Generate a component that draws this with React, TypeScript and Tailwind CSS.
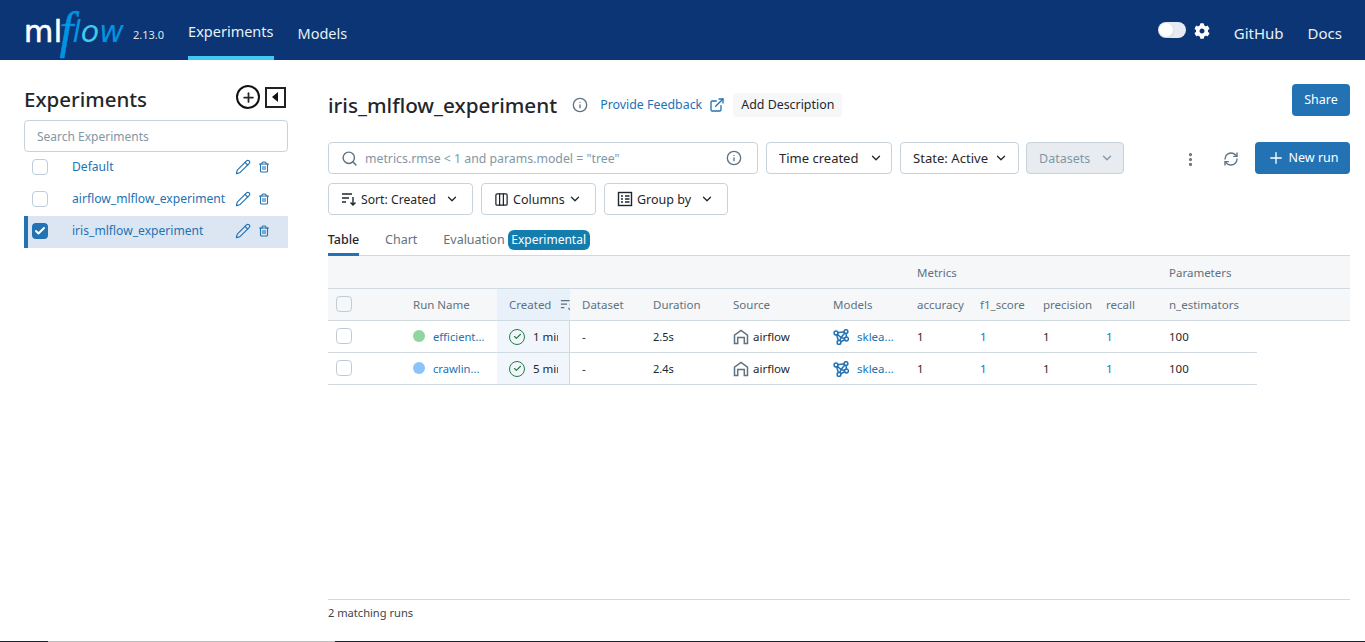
import { Check, ChevronDown, Columns3, ExternalLink, Info, MoreVertical, Pencil, Plus, RefreshCw, Search, Trash2 } from 'lucide-react';
import { FaCog } from 'react-icons/fa';

const font = { fontFamily: '"Noto Sans", "Open Sans", sans-serif' };

function Checkbox({ checked = false }: { checked?: boolean }) {
  if (checked) {
    return (
      <span className="flex h-4 w-4 items-center justify-center rounded-[4px] bg-[#2272b4]">
        <Check size={12} strokeWidth={4} className="text-white" />
      </span>
    );
  }
  return <span className="block h-4 w-4 rounded-[4px] border border-[#c0cdd8] bg-white" />;
}

function ExperimentRow({ name, active = false }: { name: string; active?: boolean }) {
  return (
    <div className={`flex h-8 items-center pb-[2px] ${active ? 'border-l-4 border-[#2272b4] bg-[#dce6f2] pl-1' : 'pl-2'}`}>
      <Checkbox checked={active} />
      <span className="ml-6 w-[163px] truncate text-[12.1px] text-[#2272b4]">{name}</span>
      <Pencil size={16} strokeWidth={1.7} className="text-[#2272b4]" />
      <Trash2 size={12} strokeWidth={2.2} className="ml-[7px] text-[#2272b4]" />
    </div>
  );
}

function SortIcon({ className = '' }: { className?: string }) {
  return (
    <svg viewBox="0 0 16 16" className={className} fill="none" stroke="currentColor" strokeWidth="1.4">
      <path d="M1 3h10M1 7h7M1 11h4" />
      <path d="M12 6v8M9.5 11.5 12 14l2.5-2.5" />
    </svg>
  );
}

function GroupIcon() {
  return (
    <svg viewBox="0 0 16 16" className="h-4 w-4 text-[#1f272d]" fill="none" stroke="currentColor" strokeWidth="1.4">
      <rect x="1.5" y="1.5" width="13" height="13" />
      <path d="M4 5h2M8 5h4.5M4 8h2M8 8h4.5M4 11h2M8 11h4.5" />
    </svg>
  );
}

function HomeIcon() {
  return (
    <svg viewBox="0 0 16 16" className="h-4 w-4 text-[#5f7281]" fill="none" stroke="currentColor" strokeWidth="1.5">
      <path d="M1.5 14.5V6.2L8 1.5l6.5 4.7v8.3h-3.2V8.5H4.7v6z" />
    </svg>
  );
}

function ModelIcon() {
  return (
    <svg viewBox="0 0 16 16" className="h-4 w-4 text-[#2272b4]" fill="none" stroke="currentColor" strokeWidth="1.5">
      <path d="M3 4 13 2.6M3 4l5 4.5 5.5 1.5M3 4l3 9.5M13 2.6 13.5 10M8 8.5 13 2.6M6 13.5 13.5 10M6 13.5 8 8.5" strokeWidth="1.5" />
      <circle cx="3" cy="4" r="1.9" fill="white" />
      <circle cx="13" cy="2.6" r="1.9" fill="white" />
      <circle cx="13.5" cy="10" r="1.9" fill="white" />
      <circle cx="6" cy="13.5" r="1.9" fill="white" />
    </svg>
  );
}

function FilterButton({
  label,
  icon,
  width,
  textSize = 'text-[12.5px]',
  right = 'pr-[13px]',
}: {
  label: string;
  icon?: React.ReactNode;
  width: string;
  textSize?: string;
  right?: string;
}) {
  return (
    <button className={`flex h-8 items-center justify-between rounded-[4px] border border-[#c7d2da] bg-white pl-3 text-[#1f272d] ${textSize} ${width} ${right}`}>
      <span className="flex items-center gap-1">
        {icon}
        <span className="pt-[2px]">{label}</span>
      </span>
      <ChevronDown size={14} strokeWidth={2.2} />
    </button>
  );
}

const gridCols = 'grid grid-cols-[85px_84px_73px_83px_80px_100px_84px_63px_63px_63px_63px_88px]';

function RunRow({ dot, name, time, duration }: { dot: string; name: string; time: string; duration: string }) {
  return (
    <div className={`${gridCols} h-8 w-[929px] items-center border-b border-[#d1d9e1] text-[11.5px] text-[#1f272d]`}>
      <div className="mb-[2px] pl-2"><Checkbox /></div>
      <div className="flex items-center gap-2">
        <span className={`h-3 w-3 rounded-full ${dot}`} />
        <span className="pt-[1px] text-[11.2px] text-[#2272b4]">{name}</span>
      </div>
      <div className="flex h-full items-center gap-2 border-r border-[#d1d9e1] bg-[#f0f6fc] pl-3">
        <span className="flex h-4 w-4 shrink-0 items-center justify-center rounded-full border-[1.5px] border-[#277c43]">
          <Check size={9} strokeWidth={3} className="text-[#277c43]" />
        </span>
        <span className="w-[25px] overflow-hidden whitespace-nowrap">{time}</span>
      </div>
      <div className="pl-3">-</div>
      <div className="pt-[1px] text-[11px]">{duration}</div>
      <div className="flex items-center gap-1"><HomeIcon />airflow</div>
      <div className="flex items-center gap-2"><ModelIcon /><span className="text-[#2272b4]">sklea...</span></div>
      <div>1</div>
      <div className="text-[#2272b4]">1</div>
      <div>1</div>
      <div className="text-[#2272b4]">1</div>
      <div>100</div>
    </div>
  );
}

export default function App() {
  return (
    <div style={font} className="flex h-[642px] w-[1365px] flex-col overflow-hidden bg-white text-[#1f272d]">
      {/* Top bar */}
      <header className="flex h-[60px] shrink-0 items-center justify-between bg-[#0b3574] pl-6 pr-[23px]">
        <div className="flex h-full items-center">
          <div className="flex h-full w-[109px] items-center leading-none">
            <span className="mt-[4px] font-['DejaVu_Sans'] text-[30px] leading-none tracking-[0.5px] text-white [-webkit-text-stroke:0.6px_white]">ml</span>
            <span className="ml-[-3px] font-['Liberation_Serif'] text-[50px] italic leading-none text-[#0194e2] [-webkit-text-stroke:0.5px_#0194e2]">f</span>
            <span className="ml-[-1px] mt-[4px] font-['DejaVu_Sans'] text-[30px] italic leading-none">
              <span className="text-[#0194e2]">l</span>
              <span className="text-[#43c9ed]">o</span>
              <span className="text-[#0194e2]">w</span>
            </span>
          </div>
          <span className="mt-[11px] text-[11px] text-[#dfe6ef]">2.13.0</span>
          <nav className="ml-6 flex h-full gap-6 text-[14.5px] text-[#e6f1f5]">
            <span className="flex h-full items-center border-b-[4px] border-[#43c9ed] pt-[8px]">Experiments</span>
            <span className="flex h-full items-center pt-[7px]">Models</span>
          </nav>
        </div>
        <div className="flex items-center pt-[6px] text-[15px] text-[#e6f1f5]">
          <span className="-mt-[6px] flex h-4 w-7 items-center rounded-full bg-white/90 p-[1px]">
            <span className="h-[14px] w-[14px] rounded-full bg-white shadow" />
          </span>
          <FaCog size={16} className="-mt-[5px] ml-2 text-white" />
          <span className="ml-6">GitHub</span>
          <span className="ml-6">Docs</span>
        </div>
      </header>

      <div className="flex min-h-0 flex-1">
        {/* Experiment list */}
        <aside className="w-[328px] shrink-0 pl-6 pr-10 pt-[24px]">
          <div className="flex h-[32px] items-center justify-between">
            <h1 className="pb-[2px] text-[20.5px] font-medium leading-none">Experiments</h1>
            <div className="flex -translate-y-[3px] items-center gap-[5px] pr-[2px]">
              <span className="flex h-6 w-6 items-center justify-center rounded-full border-2 border-[#111]">
                <Plus size={15} strokeWidth={2.8} />
              </span>
              <span className="flex h-[21px] w-[21px] items-center justify-center border-2 border-[#222]">
                <span className="mr-[2px] h-0 w-0 border-y-[5px] border-r-[6px] border-y-transparent border-r-[#111]" />
              </span>
            </div>
          </div>
          <div className="mt-[4px] flex h-8 items-center rounded-[4px] border border-[#c7d2da] px-3 pt-[2px] text-[12px] text-[#8396a5]">
            Search Experiments
          </div>
          <ExperimentRow name="Default" />
          <ExperimentRow name="airflow_mlflow_experiment" />
          <ExperimentRow name="iris_mlflow_experiment" active />
        </aside>

        {/* Main content */}
        <main className="flex min-w-0 flex-1 flex-col pr-[15px] pt-6">
          <div className="flex h-[42px] items-center">
            <h2 className="text-[20.7px] font-medium leading-none">iris_mlflow_experiment</h2>
            <Info size={16} className="ml-[15px] text-[#5f7281]" />
            <span className="ml-3 text-[12.4px] text-[#2272b4]">Provide Feedback</span>
            <ExternalLink size={16} className="ml-[7px] text-[#2272b4]" />
            <span className="ml-2 flex h-6 items-center rounded-[4px] bg-[#f5f7f9] px-2 text-[12.4px]">Add Description</span>
            <button className="ml-auto flex h-8 w-[58px] self-start items-center justify-center rounded-[4px] bg-[#2272b4] text-[12.5px] text-white">Share</button>
          </div>

          <div className="mt-4 flex items-center">
            <div className="flex h-8 w-[430px] items-center rounded-[4px] border border-[#c7d2da] pl-3 pr-[15px] text-[12.3px] text-[#8396a5]">
              <Search size={17} className="text-[#5f7281]" />
              <span className="ml-[7px] flex-1 pt-[2px]">metrics.rmse &lt; 1 and params.model = "tree"</span>
              <Info size={16} className="text-[#5f7281]" />
            </div>
            <div className="ml-2"><FilterButton label="Time created" width="w-[126px]" textSize="text-[13px]" right="pr-[8px]" /></div>
            <div className="ml-2"><FilterButton label="State: Active" width="w-[119px]" textSize="text-[13.1px]" right="pr-[10px]" /></div>
            <button className="ml-[7px] flex h-8 w-[98px] items-center justify-between rounded-[4px] border border-[#c7d2da] bg-[#e8ecf0] pl-3 pr-[9px] text-[12.5px] text-[#8396a5]">
              <span className="pt-[2px]">Datasets</span>
              <ChevronDown size={14} strokeWidth={2.2} />
            </button>
            <MoreVertical size={17} strokeWidth={2.5} className="ml-[58px] mt-[2px] text-[#5f7281]" />
            <RefreshCw size={16} className="ml-[24px] mt-[2px] text-[#5f7281]" />
            <button className="ml-auto flex h-8 w-[95px] items-center justify-center gap-1 rounded-[4px] bg-[#2272b4] text-[12.5px] text-white">
              <Plus size={18} strokeWidth={1.8} />New run
            </button>
          </div>

          <div className="mt-[9px] flex gap-2">
            <FilterButton label="Sort: Created" icon={<SortIcon className="h-4 w-4 text-[#1f272d]" />} width="w-[145px]" textSize="text-[12.2px]" />
            <FilterButton label="Columns" icon={<Columns3 size={15} />} width="w-[115px]" />
            <FilterButton label="Group by" icon={<GroupIcon />} width="w-[124px]" />
          </div>

          <div className="mt-[16px] flex h-[25px] items-start border-b border-[#d1d9e1] text-[12.5px] leading-[16px]">
            <span className="flex h-[25px] w-[31px] justify-center border-b-[3px] border-[#2272b4] pt-[1px] font-medium">Table</span>
            <span className="ml-[26px] pt-[1px] text-[#5f7281]">Chart</span>
            <span className="ml-[26px] pt-[1px] text-[#5f7281]">Evaluation</span>
            <span className="ml-[3px] flex h-5 w-[82px] -translate-y-[1px] items-center justify-center rounded-[6px] bg-[#137dae] text-[12px] text-white">Experimental</span>
          </div>

          <div className={`${gridCols} h-[33px] items-center border-b border-[#d1d9e1] bg-[#f5f7f9] pt-[2px] text-[11.5px] text-[#5f7281]`}>
            <div className="col-start-8 whitespace-nowrap">Metrics</div>
            <div className="col-start-12 whitespace-nowrap">Parameters</div>
          </div>
          <div className={`${gridCols} h-8 items-center border-b border-[#d1d9e1] bg-[#f5f7f9] text-[11.5px] text-[#5f7281]`}>
            <div className="mb-[2px] pl-2"><span className="block h-4 w-4 rounded-[4px] border border-[#c0cdd8]" /></div>
            <div>Run Name</div>
            <div className="flex h-full items-center overflow-hidden bg-[#e8f1fa] pl-3">
              Created
              <SortIcon className="ml-[9px] h-[14px] w-[14px] shrink-0" />
            </div>
            <div className="pl-3">Dataset</div>
            <div>Duration</div>
            <div>Source</div>
            <div>Models</div>
            <div>accuracy</div>
            <div>f1_score</div>
            <div>precision</div>
            <div>recall</div>
            <div>n_estimators</div>
          </div>
          <RunRow dot="bg-[#8fd6a0]" name="efficient..." time="1 minute ago" duration="2.5s" />
          <RunRow dot="bg-[#8bc3fb]" name="crawlin..." time="5 minutes ago" duration="2.4s" />

          <div className="mb-[14px] mt-auto flex h-[28px] items-center border-t border-[#d1d9e1] text-[11.1px] text-[#3a4650]">
            2 matching runs
          </div>
        </main>
      </div>

      {/* 1px strip along the bottom edge of the capture */}
      <div className="flex h-px shrink-0 bg-[#1d1f2e]">
        <div className="w-12" />
        <div className="w-[287px] bg-[#c0c0c0]" />
      </div>
    </div>
  );
}
